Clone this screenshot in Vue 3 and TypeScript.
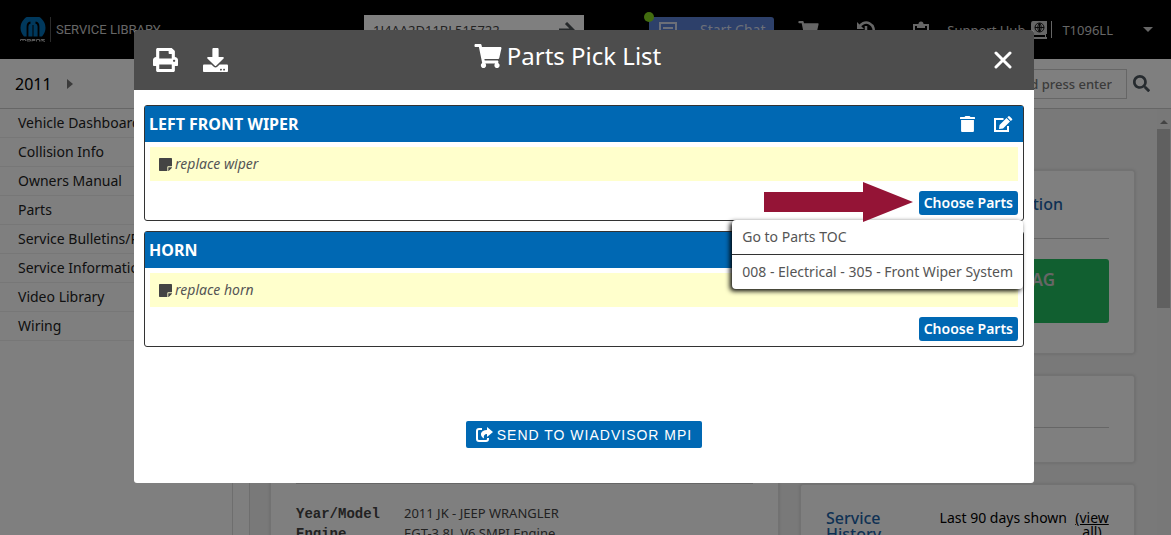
<script setup lang="ts">
import { ref } from 'vue'

interface Job {
  title: string
  note: string
  tools: boolean
}

const jobs: Job[] = [
  { title: 'LEFT FRONT WIPER', note: 'replace wiper', tools: true },
  { title: 'HORN', note: 'replace horn', tools: false },
]

const nav: string[] = [
  'Vehicle Dashboard',
  'Collision Info',
  'Owners Manual',
  'Parts',
  'Service Bulletins/Recalls',
  'Service Information',
  'Video Library',
  'Wiring',
]

const choices: string[] = ['Go to Parts TOC', '008 - Electrical - 305 - Front Wiper System']
const openJob = ref<number>(0)
const vin = ref<string>('1J4AA2D11BL515722')
const query = ref<string>('')

const cartPath =
  'M528.12 301.319l47.273-208C578.806 78.301 567.391 64 551.99 64H159.208l-9.166-44.81C147.758 8.021 137.93 0 126.529 0H24C10.745 0 0 10.745 0 24v16c0 13.255 10.745 24 24 24h69.883l70.248 343.435C147.325 417.1 136 435.222 136 456c0 30.928 25.072 56 56 56s56-25.072 56-56c0-15.674-6.447-29.835-16.824-40h209.647C430.447 426.165 424 440.326 424 456c0 30.928 25.072 56 56 56s56-25.072 56-56c0-22.172-12.888-41.332-31.579-50.405l5.517-24.276c3.413-15.018-8.002-29.319-23.403-29.319H218.117l-6.545-32h293.145c11.206 0 20.92-7.754 23.403-18.681z'
</script>

<template>
  <div class="page">
    <header class="topbar">
      <div class="brand">
        <svg class="logo" viewBox="0 0 26 25" aria-hidden="true">
          <path fill="#0070b8" d="M4 19.500A12.500 12.500 0 1 1 22 19.500Z" />
          <path fill="none" stroke="#000" stroke-width="1.800" d="M7.500 20V9.500Q7.500 6 10.500 5.500M18.500 20V9.500Q18.500 6 15.500 5.500" />
          <path fill="none" stroke="#000" stroke-width="1" d="M13 20V8" />
          <path fill="none" stroke="#aaa" stroke-width="1" d="M.5 24V22.500H5.500V24M3 22.500V24M7 22.500H10.500V24H7ZM12 24.500V22.500H15V23.500H12M16.500 24.500V22.500H19.500V24.500M21 24.500V22.500H24.500L22 23.500L25 24.500" />
        </svg>
        <span class="brand-name">SERVICE LIBRARY</span>
      </div>
      <form class="vin" @submit.prevent>
        <input v-model="vin" type="text" aria-label="VIN" />
        <button type="submit" aria-label="Go">
          <svg width="16" height="16" viewBox="0 0 16 16"><path fill="none" stroke="#4d5257" stroke-width="3" d="M0 8H14M7 1L14 8L7 15" /></svg>
        </button>
      </form>
      <div class="chat-cell">
        <button class="chat" type="button">
          <svg width="18" height="16" viewBox="0 0 18 16"><path fill="none" stroke="#d8dff0" stroke-width="2" d="M1 1H17V12H9L5 15V12H1ZM4 6H14" /></svg>
          <span>Start Chat</span>
        </button>
        <i class="dot"></i>
      </div>
      <div class="tools">
        <button type="button" aria-label="Cart"><svg width="21" height="18" viewBox="0 0 576 512"><path fill="#ccc" :d="cartPath" /></svg></button>
        <button type="button" aria-label="History">
          <svg width="18" height="18" viewBox="0 0 18 18"><path fill="none" stroke="#ccc" stroke-width="2.500" d="M2 7A7.500 7.500 0 1 1 4 14.500M9 5V10L12 12" /><path fill="#ccc" d="M0 1V8H7Z" /></svg>
        </button>
        <button type="button" aria-label="Clipboard">
          <svg width="16" height="18" viewBox="0 0 16 18"><path fill="none" stroke="#ccc" stroke-width="2" d="M1 4H15V17H1Z" /><path fill="#ccc" d="M4 3H5.500A2.500 2.500 0 0 1 10.500 3H12V7H4Z" /></svg>
        </button>
        <a class="hub" href="#">Support Hub
          <svg width="16" height="18" viewBox="0 0 16 18"><path fill="#ccc" d="M2 0H16V13H15V16H16V18H2Q0 18 0 15V3Q0 0 2 0Z" /><path fill="#000" d="M3 14H14V16H3Z" /><path fill="none" stroke="#111" d="M8.500 2A4.500 4.500 0 1 0 8.500 11A4.500 4.500 0 1 0 8.500 2V11M4 6.500H13M8.500 2Q5 6.500 8.500 11Q12 6.500 8.500 2" /></svg>
        </a>
        <button class="user" type="button">T1096LL <i class="caret"></i></button>
      </div>
    </header>

    <div class="crumbs">
      <span class="year">2011</span><i class="chev"></i>
      <form class="search" @submit.prevent>
        <input v-model="query" type="text" aria-label="Search" placeholder="Type keyword and press enter" />
        <button type="submit" aria-label="Search">
          <svg width="17" height="17" viewBox="0 0 512 512"><path fill="#4d565e" d="M505 442.700L405.300 343c-4.500-4.500-10.600-7-17-7H372c27.600-35.300 44-79.700 44-128C416 93.100 322.900 0 208 0S0 93.100 0 208s93.100 208 208 208c48.300 0 92.700-16.400 128-44v16.300c0 6.400 2.500 12.500 7 17l99.700 99.700c9.400 9.400 24.600 9.400 33.900 0l28.300-28.300c9.400-9.400 9.400-24.600.1-34zM208 336c-70.700 0-128-57.200-128-128 0-70.700 57.200-128 128-128 70.700 0 128 57.200 128 128 0 70.700-57.200 128-128 128z" /></svg>
        </button>
      </form>
    </div>

    <div class="main">
      <nav class="side">
        <a v-for="item in nav" :key="item" href="#">{{ item }}</a>
      </nav>
      <div class="splitter"></div>
      <main class="content">
        <section class="panel vehicle">
          <div class="vehicle-photo"></div>
          <dl>
            <dt>Year/Model</dt><dd>2011 JK - JEEP WRANGLER</dd>
            <dt>Engine</dt><dd>EGT-3.8L V6 SMPI Engine</dd>
          </dl>
        </section>
        <div class="column">
          <section class="panel info">
            <h2>Information</h2>
            <button type="button" class="green">TAG</button>
          </section>
          <section class="panel blank"><hr /></section>
          <section class="panel history">
            <h2>Service History</h2>
            <span>Last 90 days shown</span>
            <a href="#">(view all)</a>
          </section>
        </div>
      </main>
      <div class="scrollbar"><i class="up"></i><i class="thumb"></i></div>
    </div>

    <div class="overlay">
      <div class="modal" role="dialog" aria-modal="true" aria-labelledby="pick-title">
        <div class="modal-head">
          <div class="head-tools">
            <button type="button" aria-label="Print">
              <svg width="25" height="24" viewBox="0 0 512 512" preserveAspectRatio="none"><path fill="#fff" d="M448 192V77.250c0-8.490-3.370-16.620-9.370-22.630L393.370 9.370c-6-6-14.140-9.370-22.630-9.370H96C78.330 0 64 14.330 64 32v160c-35.350 0-64 28.650-64 64v112c0 8.840 7.160 16 16 16h48v96c0 17.670 14.330 32 32 32h320c17.670 0 32-14.330 32-32v-96h48c8.840 0 16-7.160 16-16V256c0-35.350-28.650-64-64-64zm-64 256H128v-96h256v96zm0-224H128V64h192v48c0 8.840 7.160 16 16 16h48v96zm48 72c-13.250 0-24-10.750-24-24 0-13.260 10.750-24 24-24s24 10.740 24 24c0 13.250-10.750 24-24 24z" /></svg>
            </button>
            <button type="button" aria-label="Download">
              <svg width="25" height="24" viewBox="0 0 512 512" preserveAspectRatio="none"><path fill="#fff" d="M216 0h80c13.300 0 24 10.700 24 24v168h87.700c17.800 0 26.700 21.500 14.100 34.100L269.700 378.300c-7.500 7.500-19.800 7.500-27.300 0L90.100 226.100c-12.600-12.600-3.700-34.100 14.100-34.100H192V24c0-13.300 10.700-24 24-24zm296 376v112c0 13.300-10.700 24-24 24H24c-13.300 0-24-10.700-24-24V376c0-13.300 10.700-24 24-24h146.700l49 49c20.100 20.100 52.500 20.100 72.600 0l49-49H488c13.300 0 24 10.700 24 24zm-124 88c0-11-9-20-20-20s-20 9-20 20 9 20 20 20 20-9 20-20zm64 0c0-11-9-20-20-20s-20 9-20 20 9 20 20 20 20-9 20-20z" /></svg>
            </button>
          </div>
          <h1 id="pick-title">
            <svg width="28" height="24" viewBox="0 0 576 512"><path fill="#fff" :d="cartPath" /></svg>
            Parts Pick List
          </h1>
          <button class="close" type="button" aria-label="Close">
            <svg width="18" height="18" viewBox="0 0 18 18"><path fill="none" stroke="#fff" stroke-width="3" stroke-linecap="round" d="M2 2L16 16M16 2L2 16" /></svg>
          </button>
        </div>

        <div class="modal-body">
          <section v-for="(job, i) in jobs" :key="job.title" class="job">
            <div class="job-head">
              <h2>{{ job.title }}</h2>
              <div v-if="job.tools" class="job-tools">
                <button type="button" aria-label="Delete">
                  <svg width="15" height="16" viewBox="0 0 448 512" preserveAspectRatio="none"><path fill="#fff" d="M432 32H312l-9.400-18.700A24 24 0 0 0 281.100 0H166.800a23.720 23.720 0 0 0-21.400 13.300L136 32H16A16 16 0 0 0 0 48v32a16 16 0 0 0 16 16h416a16 16 0 0 0 16-16V48a16 16 0 0 0-16-16zM32 128V480Q32 512 64 512H384Q416 512 416 480V128Z" /></svg>
                </button>
                <button type="button" aria-label="Edit">
                  <svg width="19" height="16" viewBox="0 0 19 16"><path fill="none" stroke="#fff" stroke-width="2" d="M9.500 3H1V15H14V10" /><path fill="#fff" d="M5.500 9L12.500 2L16 5.500L9 12.500L5 13ZM13.300 1.200L14.200.4Q15 -.2 15.800.5L18 2.700Q18.600 3.400 18 4L16.800 5Z" /></svg>
                </button>
              </div>
            </div>
            <div class="job-body">
              <p class="note">
                <svg width="13" height="13" viewBox="0 32 448 448"><path fill="#444" d="M312 320h136V56c0-13.300-10.700-24-24-24H24C10.700 32 0 42.700 0 56v400c0 13.300 10.700 24 24 24h264V344c0-13.200 10.800-24 24-24zm129 55l-98 98c-4.500 4.500-10.600 7-17 7h-6V352h128v6.100c0 6.300-2.500 12.400-7 16.900z" /></svg>
                {{ job.note }}
              </p>
              <div class="choose">
                <button type="button" class="primary" @click="openJob = i">Choose Parts</button>
                <template v-if="openJob === i">
                  <ul class="menu">
                    <li v-for="c in choices" :key="c"><button type="button">{{ c }}</button></li>
                  </ul>
                  <svg class="pointer" width="149" height="40" viewBox="0 0 149 40"><path fill="#941436" d="M0 10H99V0L149 20L99 40V30H0Z" /></svg>
                </template>
              </div>
            </div>
          </section>
          <button type="button" class="send">
            <svg width="17" height="15" viewBox="0 0 17 15"><path fill="none" stroke="#fff" stroke-width="2" d="M6 2H3Q1 2 1 4V12Q1 14 3 14H10Q12 14 12 12V11" /><path fill="#fff" d="M11 0L17 5L11 10V7Q7 7 8 11.500Q4.500 9.500 5 6.500Q6 3 11 3Z" /></svg>
            SEND TO WIADVISOR MPI
          </button>
        </div>
      </div>
    </div>
  </div>
</template>

<style>
body { margin: 0; }
</style>

<style scoped>
* { box-sizing: border-box; }
.page { position: relative; height: 100vh; overflow: hidden; display: flex; flex-direction: column; background: #fff; font: 14px/20px "Noto Sans", sans-serif; color: #222; }
button { border: 0; padding: 0; background: none; font: inherit; color: inherit; cursor: pointer; }
svg { display: block; flex: none; }
a { color: inherit; text-decoration: none; }
h1, h2, p, ul, dl, dd { margin: 0; padding: 0; }

.topbar { flex: none; height: 59px; background: #000; display: grid; grid-template-columns: 344px 285px 140px 1fr; align-items: center; padding: 0 18px 0 20px; color: #ccc; font-size: 13px; }
.brand { display: flex; align-items: center; }
.logo { width: 26px; height: 25px; }
.brand-name { margin-left: 4px; padding-left: 5px; border-left: 1px solid #555; font: 13px/25px Roboto, sans-serif; color: #ccc; }
.vin { display: flex; width: 220px; height: 29px; background: #fff; align-items: center; padding-right: 9px; }
.vin input { flex: 1; min-width: 0; border: 0; background: none; padding: 0 9px; font: 13px "Noto Sans", sans-serif; color: #444; }
.chat-cell { position: relative; width: 125px; }
.chat { width: 100%; height: 26px; display: flex; align-items: center; gap: 23px; padding-left: 10px; border-radius: 3px; background: #5b80d4; color: #d8dff0; font-size: 14px; }
.dot { position: absolute; left: -5px; top: -5px; width: 10px; height: 10px; border-radius: 50%; background: #84d81e; }
.tools { display: flex; align-items: center; justify-content: flex-end; }
.tools > button { margin-right: 38px; }
.tools > button:nth-child(3) { margin-right: 18px; }
.hub { display: flex; align-items: center; gap: 6px; padding-right: 4px; }
.tools > .user { margin: 0; height: 17px; padding-left: 10px; border-left: 1px solid #ccc; display: flex; align-items: center; gap: 30px; }
.caret { border: 5px solid transparent; border-top-color: #ccc; border-bottom: 0; }

.crumbs { flex: none; height: 50px; border-bottom: 1px solid #ccc; display: flex; align-items: center; padding: 0 21px 0 15px; }
.year { font-size: 16px; color: #000; }
.chev { margin-left: 15px; border: 5px solid transparent; border-left: 6px solid #777; border-right: 0; }
.search { margin-left: auto; display: flex; align-items: center; gap: 6px; }
.search input { width: 230px; height: 30px; border: 1px solid #ccc; background: #fff; padding: 0 14px; text-align: right; font: 500 13px "Noto Sans", sans-serif; }
.search input::placeholder { color: #777; }

.main { flex: 1; min-height: 0; display: flex; }
.side { flex: none; width: 233px; border-right: 1px solid #ddd; }
.side a { display: block; height: 29px; line-height: 28px; padding-left: 18px; border-bottom: 1px solid #eee; color: #222; white-space: nowrap; }
.splitter { flex: none; width: 17px; border-right: 1px solid #ddd; }
.content { flex: 1; min-width: 0; background: #f2f2f2; display: flex; gap: 21px; padding: 61px 22px 0 20px; }
.panel { flex: none; background: #fff; border: 1px solid #e4e4e4; border-radius: 3px; box-shadow: 0 0 3px #ccc; padding: 0 25px; }
.vehicle { flex: 1; height: 600px; }
.vehicle-photo { height: 313px; border-bottom: 1px solid #ccc; }
.vehicle dl { display: grid; grid-template-columns: 108px 1fr; padding-top: 20px; line-height: 19px; font-size: 13px; color: #444; }
.vehicle dt { font: bold 14px/20px "Liberation Mono", monospace; }
.column { flex: none; width: 335px; display: flex; flex-direction: column; gap: 21px; }
.column h2 { font-size: 16px; font-weight: 500; color: #1c63a8; }
.info { height: 184px; }
.info h2 { height: 68px; line-height: 66px; border-bottom: 1px solid #ccc; text-align: right; padding-right: 46px; }
.green { display: block; width: 100%; height: 64px; margin-top: 20px; padding: 0 54px 22px 0; border-radius: 3px; background: #22bf60; color: #ccc; font-size: 17px; font-weight: 600; text-align: right; }
.blank { height: 88px; }
.blank hr { margin: 51px 0 0; border: 0; border-top: 1px solid #ccc; }
.history { display: flex; padding-top: 23px; height: 200px; }
.history h2 { width: 90px; line-height: 16px; padding-top: 2px; }
.history span { margin-left: auto; color: #000; }
.history a { width: 42px; padding: 3px 0 0 8px; line-height: 14px; text-align: center; text-decoration: underline; color: #000; }
.scrollbar { flex: none; width: 14px; background: #f1f1f1; padding-top: 11px; }
.up { display: block; margin: 0 auto 5px; width: 8px; border: 4px solid transparent; border-bottom-color: #888; border-top: 0; }
.thumb { display: block; width: 13px; height: 179px; background: #c1c1c1; }

.overlay { position: absolute; inset: 0; padding: 30px 137px 0 134px; background: rgba(0, 0, 0, 0.5); }
.modal { background: #fff; border-radius: 3px; overflow: hidden; }
.modal-head { height: 60px; background: #4d4d4d; display: grid; grid-template-columns: 1fr auto 1fr; align-items: center; padding: 0 22px 0 19px; color: #fff; }
.head-tools { display: flex; gap: 25px; }
.modal-head h1 { display: flex; align-items: center; gap: 5px; padding: 0 30px 8px 0; font-size: 24px; line-height: 32px; font-weight: 400; }
.close { justify-self: end; }
.modal-body { padding: 15px 10px 35px; display: flex; flex-direction: column; gap: 10px; }
.job { border: 1px solid #333; border-radius: 3px; }
.job-head { height: 36px; background: #0068b3; color: #fff; display: flex; align-items: center; justify-content: space-between; padding: 0 10px 0 4px; }
.job-head h2 { font-size: 16px; font-weight: 700; }
.job-tools { display: flex; gap: 19px; }
.job-body { padding: 5px; }
.note { height: 34px; display: flex; align-items: center; gap: 3px; padding-left: 9px; background: #ffffcc; font-style: italic; color: #555; }
.choose { position: relative; display: flex; justify-content: flex-end; margin-top: 10px; }
.primary { height: 24px; padding: 0 5px; border-radius: 3px; background: #0068b3; color: #fff; font-weight: 600; }
.menu { position: absolute; z-index: 1; top: 29px; right: -5px; list-style: none; background: #fff; border-radius: 4px; box-shadow: -2px 2px 5px #000; }
.menu li + li { border-top: 1px solid #333; }
.menu button { display: block; width: 100%; height: 34px; padding: 0 10px; text-align: left; color: #555; white-space: nowrap; }
.pointer { position: absolute; z-index: 2; top: -9px; right: 105px; }
.send { align-self: center; margin-top: 64px; height: 27px; padding: 0 10px; display: flex; align-items: center; gap: 4px; border-radius: 2px; background: #0068b3; color: #fff; font: 14px "Liberation Sans", Arial, sans-serif; letter-spacing: 1px; }
</style>
